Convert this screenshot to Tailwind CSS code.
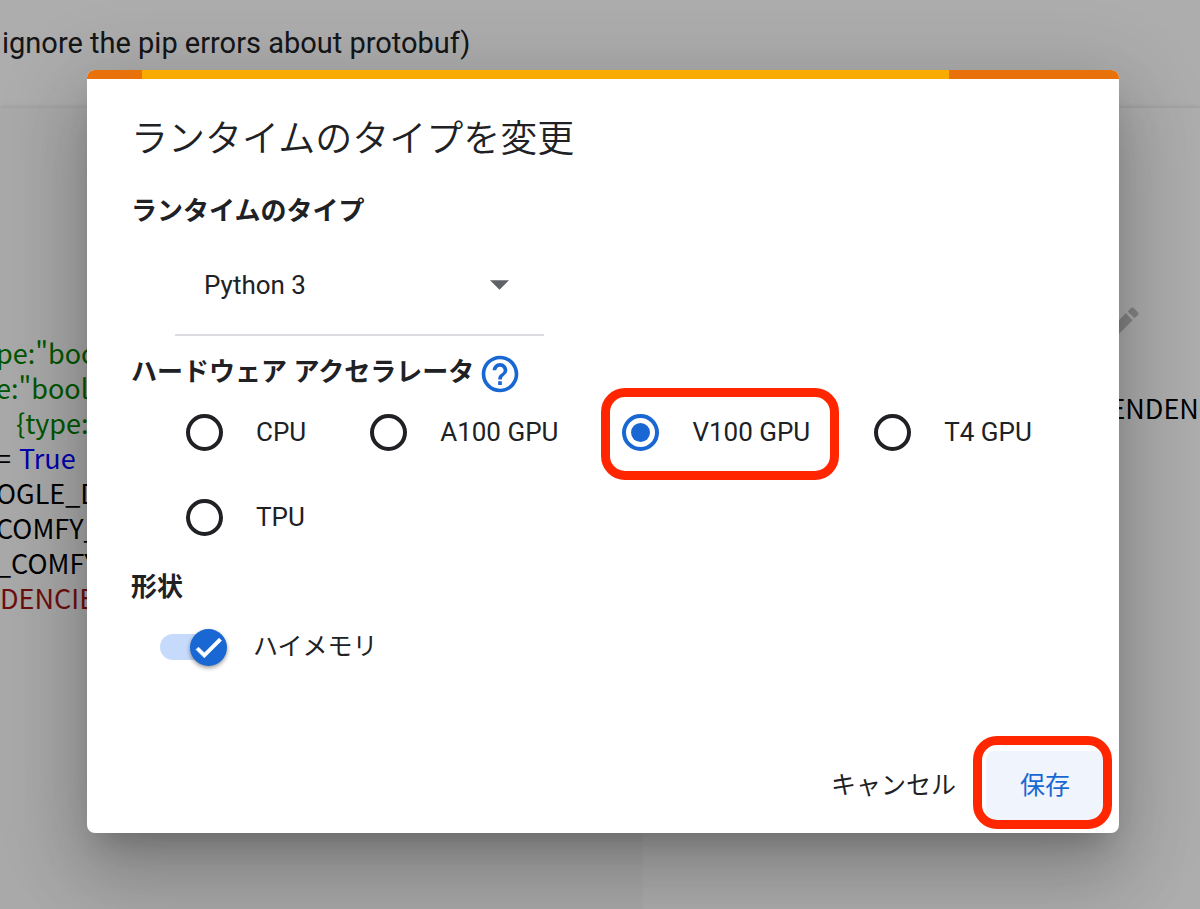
<!DOCTYPE html>
<html lang="ja">
<head>
    <meta charset="UTF-8">
    <meta name="viewport" content="width=device-width, initial-scale=1.0">
    <title>ランタイムのタイプを変更</title>
    <script src="https://cdn.jsdelivr.net/npm/@tailwindcss/browser@4"></script>
</head>
<body class="relative h-screen overflow-hidden bg-white font-[Roboto,'Noto_Sans_CJK_JP',sans-serif] text-[#202124]">
    <!-- Notebook behind the dialog -->
    <div class="flex h-full flex-col">
        <header class="flex h-[108px] shrink-0 items-start pt-[22px]">
            <p class="whitespace-nowrap pl-0.5 text-[29px] leading-[42px]">ignore the pip errors about protobuf)</p>
        </header>
        <main class="flex flex-1 font-['Noto_Sans_CJK_JP',sans-serif] text-[27px] leading-[35px] text-black shadow-[0_-2px_4px_rgba(0,0,0,0.08)]">
            <div class="w-[53.6%] shrink-0 overflow-hidden bg-[#fafafa] pt-[227px]">
                <pre class="-ml-1 font-['Noto_Sans_CJK_JP',sans-serif]"><span class="block text-[#008000]">pe:"boolean"}</span><span class="block text-[#008000]">e:"boolean"}</span><span class="block pl-5 text-[#008000]">{type:"boolean"}</span><span class="block">= <span class="ml-0.5 text-[#0000ff]">True</span></span><span class="block">OGLE_DRIVE</span><span class="block">COMFY_UI</span><span class="block">_COMFY_UI</span><span class="block pl-1 text-[#a31515]">DENCIES</span></pre>
            </div>
            <div class="flex flex-1 flex-col items-end overflow-hidden pt-[194px]">
                <svg class="mr-14 size-11 fill-[#c4c4c4]" viewBox="0 0 24 24"><path d="M3 17.25V21h3.75L17.81 9.94l-3.75-3.75L3 17.25zM20.71 7.04a1 1 0 0 0 0-1.41l-2.34-2.34a1 1 0 0 0-1.41 0l-1.83 1.83 3.75 3.75 1.83-1.83z"/></svg>
                <p class="-mr-14 mt-11">ENDENCIES</p>
            </div>
        </main>
    </div>

    <!-- Dialog -->
    <div class="absolute inset-0 bg-black/32 pl-[87px] pr-[81px] pt-[70px]">
        <form role="dialog" aria-labelledby="dialogTitle" class="rounded-lg bg-white shadow-[0_20px_28px_-13px_rgba(0,0,0,0.2),0_44px_70px_6px_rgba(0,0,0,0.14),0_17px_84px_15px_rgba(0,0,0,0.12)]">
            <div class="flex h-[9px] overflow-hidden rounded-t-lg bg-[#e8710a]">
                <div class="ml-[5.3%] w-[78.2%] bg-[#f9ab00]"></div>
            </div>

            <div class="px-11 pt-[34px]">
                <h1 id="dialogTitle" class="text-[37px] font-[350] leading-[54px]">ランタイムのタイプを変更</h1>

                <h2 class="mt-6 text-[26px] font-bold leading-[40px]"><label for="runtimeType">ランタイムのタイプ</label></h2>
                <div class="relative ml-11 mt-[7px] w-[369px]">
                    <select id="runtimeType" class="h-[98px] w-full appearance-none border-b-2 border-[#dadce0] bg-transparent pb-0.5 pl-[29px] text-[26px]">
                        <option>Python 3</option>
                    </select>
                    <svg class="pointer-events-none absolute right-[35px] top-[42px] h-[10px] w-[19px] fill-[#5f6368]" viewBox="0 0 10 5"><path d="M0 0h10L5 5z"/></svg>
                </div>

                <div class="mt-4 flex items-center gap-2">
                    <h2 class="text-[26px] font-bold leading-[40px]">ハードウェア アクセラレータ</h2>
                    <button type="button" aria-label="ヘルプ" class="-mx-1 h-[40px]">
                        <svg class="size-11 fill-[#1967d2]" viewBox="0 0 24 24"><path d="M11 18h2v-2h-2v2zm1-16C6.48 2 2 6.48 2 12s4.48 10 10 10 10-4.48 10-10S17.52 2 12 2zm0 18c-4.41 0-8-3.59-8-8s3.59-8 8-8 8 3.59 8 8-3.59 8-8 8zm0-14c-2.21 0-4 1.79-4 4h2c0-1.1.9-2 2-2s2 .9 2 2c0 2-3 1.75-3 5h2c0-2.25 3-2.5 3-5 0-2.21-1.79-4-4-4z"/></svg>
                    </button>
                </div>

                <div class="ml-[55px] mt-5 flex flex-wrap gap-x-16 gap-y-11 text-[26px] leading-[41px]">
                    <label class="flex items-center gap-[33px]">
                        <input type="radio" name="accelerator" class="size-[37px] appearance-none rounded-full border-4 border-[#202124] checked:border-[#1967d2] checked:bg-[#1967d2] checked:bg-clip-content checked:p-[5px]">CPU
                    </label>
                    <label class="flex items-center gap-[33px]">
                        <input type="radio" name="accelerator" class="size-[37px] appearance-none rounded-full border-4 border-[#202124] checked:border-[#1967d2] checked:bg-[#1967d2] checked:bg-clip-content checked:p-[5px]">A100 GPU
                    </label>
                    <label class="relative flex items-center gap-[33px]">
                        <input type="radio" name="accelerator" checked class="size-[37px] appearance-none rounded-full border-4 border-[#202124] checked:border-[#1967d2] checked:bg-[#1967d2] checked:bg-clip-content checked:p-[5px]">V100 GPU
                        <span class="pointer-events-none absolute -bottom-[27px] -left-[21px] -right-[29px] -top-6 rounded-3xl border-9 border-[#ff2600]"></span>
                    </label>
                    <label class="flex items-center gap-[33px]">
                        <input type="radio" name="accelerator" class="size-[37px] appearance-none rounded-full border-4 border-[#202124] checked:border-[#1967d2] checked:bg-[#1967d2] checked:bg-clip-content checked:p-[5px]">T4 GPU
                    </label>
                    <label class="flex items-center gap-[33px]">
                        <input type="radio" name="accelerator" class="size-[37px] appearance-none rounded-full border-4 border-[#202124] checked:border-[#1967d2] checked:bg-[#1967d2] checked:bg-clip-content checked:p-[5px]">TPU
                    </label>
                </div>

                <h2 class="mt-[29px] text-[26px] font-bold leading-[40px]">形状</h2>
                <label class="relative ml-[29px] mt-5 flex w-fit items-center gap-[26px] text-[25px] leading-[40px]">
                    <input type="checkbox" role="switch" checked class="mr-[5px] h-[26px] w-[62px] appearance-none rounded-full bg-[#c6dafc]">
                    <span class="absolute left-[30px] flex size-[37px] items-center justify-center rounded-full bg-[#1967d2] shadow-[0_2px_4px_rgba(0,0,0,0.4)]">
                        <svg class="size-[33px] fill-white stroke-white stroke-[0.5]" viewBox="0 0 24 24"><path d="M19.69 5.23L8.96 15.96l-4.23-4.23L2.96 13.5l6 6L21.46 7z"/></svg>
                    </span>
                    ハイメモリ
                </label>
            </div>

            <div class="mt-[84px] flex items-center justify-end gap-[30px] pb-[13px] pr-[15px] text-[25px]">
                <button type="button">キャンセル</button>
                <div class="relative">
                    <button type="submit" class="h-[69px] rounded-lg bg-[#f0f4fd] px-[34px] text-[#1967d2]">保存</button>
                    <span class="pointer-events-none absolute -bottom-[9px] -left-[13px] -right-2 -top-[15px] rounded-3xl border-9 border-[#ff2600]"></span>
                </div>
            </div>
        </form>
    </div>
</body>
</html>
